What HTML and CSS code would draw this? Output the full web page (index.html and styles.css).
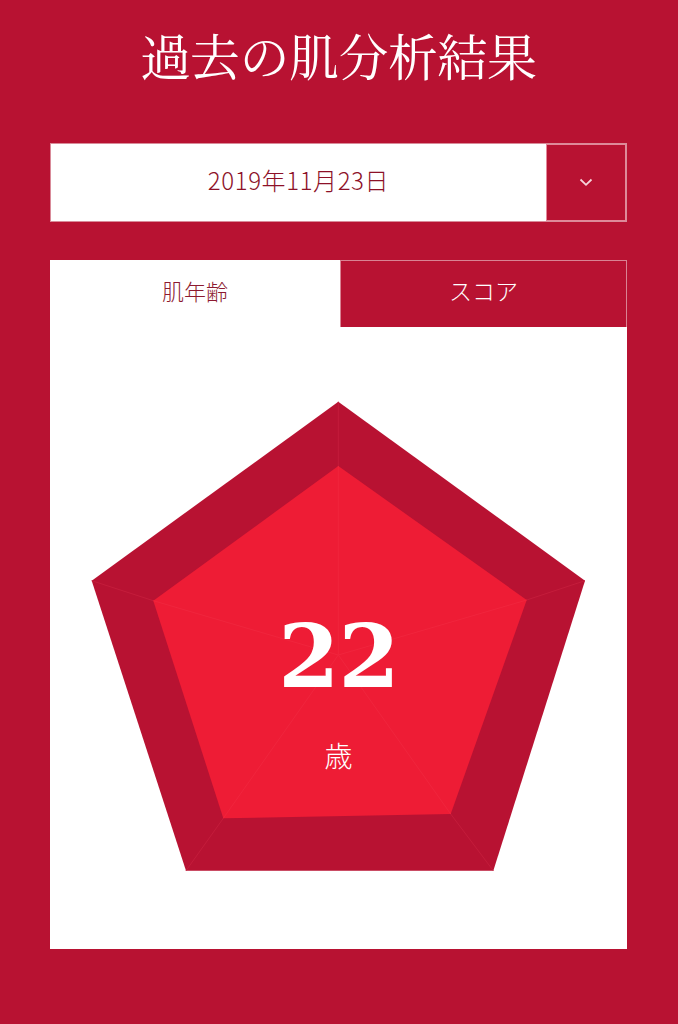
FILE: index.html
```html
<!DOCTYPE html>
<html lang="ja">
<head>
<meta charset="utf-8">
<link rel="stylesheet" href="styles.css">
</head>
<body>
<div class="page">
  <h1 class="title">過去の肌分析結果</h1>
  <div class="select">
    <div class="select-value">2019年11月23日</div>
    <div class="select-btn">
      <svg width="14" height="9" viewBox="0 0 14 9"><path d="M1.5 1.5 L7 6.8 L12.5 1.5" fill="none" stroke="#f6d5db" stroke-width="1.8"/></svg>
    </div>
  </div>
  <div class="panel">
    <div class="tabs">
      <div class="tab active">肌年齢</div>
      <div class="tab">スコア</div>
    </div>
    <div class="chart">
      <svg class="pent" width="577" height="622" viewBox="50 327 577 622">
        <polygon points="338.3,401.7 585,580.7 493.3,870.7 186,870.7 91.7,580.7" fill="#b81232"/>
        <g stroke="#c41c3b" stroke-width="1">
          <line x1="338.3" y1="401.7" x2="338.3" y2="466"/>
          <line x1="585" y1="580.7" x2="526.7" y2="600"/>
          <line x1="493.3" y1="870.7" x2="450.7" y2="814"/>
          <line x1="186" y1="870.7" x2="223.3" y2="818.3"/>
          <line x1="91.7" y1="580.7" x2="153.3" y2="600.7"/>
        </g>
        <polygon points="338.3,466 526.7,600 450.7,814 223.3,818.3 153.3,600.7" fill="#ee1c35"/>
        <g stroke="#f0253d" stroke-width="1">
          <line x1="338.3" y1="466" x2="338.3" y2="655"/>
          <line x1="526.7" y1="600" x2="338.3" y2="655"/>
          <line x1="450.7" y1="814" x2="338.3" y2="655"/>
          <line x1="223.3" y1="818.3" x2="338.3" y2="655"/>
          <line x1="153.3" y1="600.7" x2="338.3" y2="655"/>
        </g>
      </svg>
      <div class="age">
        <div class="age-num">22</div>
        <div class="age-unit">歳</div>
      </div>
    </div>
  </div>
</div>
</body>
</html>
```

FILE: styles.css
```css
html, body {
  margin: 0;
  padding: 0;
}
body {
  background: #b81232;
  width: 678px;
  height: 1024px;
  overflow: hidden;
  font-family: "Noto Sans CJK JP", "Noto Sans", sans-serif;
}
.page {
  padding: 0 51px 0 50px;
}
.title {
  margin: 0 0 49px;
  padding-top: 17px;
  height: 77px;
  line-height: 74px;
  font-family: "Noto Serif CJK JP", "Liberation Serif", "Noto Sans CJK JP", serif;
  font-weight: 400;
  font-size: 50px;
  color: #fff;
  text-align: center;
  letter-spacing: -0.5px;
}
.select {
  display: flex;
  height: 79px;
  box-sizing: border-box;
  border: 1px solid #d98b99;
  background: #fff;
}
.select-value {
  flex: 1;
  display: flex;
  align-items: center;
  justify-content: center;
  padding-bottom: 6px;
  font-size: 24px;
  font-weight: 300;
  color: #8d1128;
  letter-spacing: 0.6px;
}
.select-btn {
  width: 80px;
  box-sizing: border-box;
  background: #b81232;
  border: 1px solid #e3889a;
  display: flex;
  align-items: center;
  justify-content: center;
}
.panel {
  margin-top: 38px;
  background: #fff;
  height: 689px;
  display: flex;
  flex-direction: column;
}
.tabs {
  display: flex;
  height: 67px;
}
.tab {
  display: flex;
  align-items: center;
  justify-content: center;
  font-size: 22px;
  font-weight: 300;
  padding-bottom: 8px;
  box-sizing: border-box;
}
.tab.active {
  width: 290px;
  color: #8d1a30;
  background: #fff;
}
.tab:not(.active) {
  flex: 1;
  background: #b81232;
  color: #fff;
  border: 1px solid #d98393;
  border-bottom: none;
  font-size: 23px;
}
.chart {
  flex: 1;
  display: grid;
}
.chart > * {
  grid-area: 1 / 1;
}
.pent {
  display: block;
}
.age {
  display: flex;
  flex-direction: column;
  align-items: center;
  padding-top: 284px;
  color: #fff;
}
.age-num {
  font-family: "DejaVu Serif", "Liberation Serif", serif;
  font-weight: 700;
  font-size: 88px;
  line-height: 90px;
  letter-spacing: -1px;
}
.age-unit {
  margin-top: 40px;
  font-size: 28px;
  font-weight: 300;
  line-height: 28px;
}
```
